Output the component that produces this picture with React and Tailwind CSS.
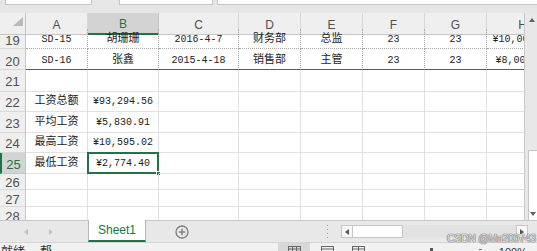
import React from 'react';

const GRID = 'grid grid-cols-[26px_62px_71px_80px_62px_62px_62px_62px_72px]';
const MONO = "[font-family:'Liberation_Mono','Noto_Sans_CJK_SC',monospace]";
const SANS = "[font-family:'Liberation_Sans','Noto_Sans_CJK_SC',sans-serif]";

const cols = ['A', 'B', 'C', 'D', 'E', 'F', 'G', 'H'];

const rows = [
  { n: 19, h: 'h-[20px]', kind: 'data', cells: ['SD-15', '胡珊珊', '2016-4-7', '财务部', '总监', '23', '23', '¥10,000.00'] },
  { n: 20, h: 'h-[21px]', kind: 'dataLast', cells: ['SD-16', '张鑫', '2015-4-18', '销售部', '主管', '23', '23', '¥8,000.00'] },
  { n: 21, h: 'h-[22px]', cells: [] },
  { n: 22, h: 'h-[20px]', cells: ['工资总额', '¥93,294.56'] },
  { n: 23, h: 'h-[21px]', cells: ['平均工资', '¥5,830.91'] },
  { n: 24, h: 'h-[20px]', cells: ['最高工资', '¥10,595.02'] },
  { n: 25, h: 'h-[21px]', cells: ['最低工资', '¥2,774.40'], sel: true },
  { n: 26, h: 'h-[16px]', cells: [] },
  { n: 27, h: 'h-[17px]', cells: [] },
  { n: 28, h: 'h-[17px]', cells: [] },
];

const isCjk = (s) => /[\u4e00-\u9fff]/.test(s);

function Tri({ dir, className }) {
  const pts = {
    up: '0,4 3,0 6,4',
    down: '0,0 6,0 3,4',
    left: '4,0 4,6 0,3',
    right: '0,0 0,6 4,3',
  }[dir];
  const flat = dir === 'up' || dir === 'down';
  return (
    <svg width={flat ? 6 : 4} height={flat ? 4 : 6} viewBox={flat ? '0 0 6 4' : '0 0 4 6'} className={className}>
      <polygon points={pts} fill="currentColor" />
    </svg>
  );
}

function Cell({ text, kind, sel }) {
  let border = 'border-r border-b border-[#e1e1e1]';
  if (kind === 'data') border = 'border-r border-b border-dotted border-[#a8a8a8] pt-[2px]';
  if (kind === 'dataLast')
    border = 'border-r border-b border-dotted border-[#a8a8a8] [border-bottom-style:solid] border-b-[#5c5c5c] pt-[2px]';
  const size = text && isCjk(text) ? 'text-[11px]' : 'text-[10px]';
  return (
    <div className={`relative flex items-center justify-center whitespace-nowrap text-[#222] ${MONO} ${size} ${border}`}>
      {text}
      {sel && (
        <>
          <div className="absolute -left-px -top-px -right-px -bottom-px border-2 border-[#217346]" />
          <div className="absolute -right-[3px] -bottom-[3px] h-[5px] w-[5px] bg-[#217346] border border-white" />
        </>
      )}
    </div>
  );
}

function Row({ r }) {
  const low = r.kind ? 'items-end pb-[1px]' : 'items-center pt-[2px]';
  return (
    <div className={`${GRID} ${r.h} shrink-0`}>
      <div
        className={`flex justify-center border-b border-r text-[13px] leading-none ${low} ${SANS} ${
          r.sel
            ? 'bg-[#d3d3d3] text-[#217346] border-l-2 border-l-[#217346] border-r-[#c6c6c6] border-b-[#c6c6c6]'
            : 'bg-[#efefef] text-[#505050] border-r-[#c6c6c6] border-b-[#d8d8d8]'
        }`}
      >
        {r.n}
      </div>
      {cols.map((c, i) => (
        <Cell key={c} text={r.cells[i]} kind={r.kind} sel={r.sel && i === 1} />
      ))}
    </div>
  );
}

function Sheet() {
  return (
    <div className="flex h-[207px] w-[524px] flex-col overflow-hidden bg-white">
      <div className={`${GRID} h-[16px] shrink-0`}>
        <div className="relative border-r border-b border-[#c6c6c6] bg-[#efefef]">
          <svg width="10" height="9" viewBox="0 0 10 9" className="absolute left-[13px] top-[4px]">
            <polygon points="10,0 10,9 0,9" fill="#b9b9b9" />
          </svg>
        </div>
        {cols.map((c) => (
          <div
            key={c}
            className={`flex items-center justify-center border-r text-[12px] ${SANS} ${
              c === 'B'
                ? 'bg-[#d3d3d3] text-[#217346] border-b-2 border-b-[#217346] border-r-[#c6c6c6]'
                : 'bg-[#efefef] text-[#505050] border-b border-b-[#c6c6c6] border-r-[#d8d8d8]'
            }`}
          >
            <span className="pt-[2px]">{c}</span>
          </div>
        ))}
      </div>
      {rows.map((r) => (
        <Row key={r.n} r={r} />
      ))}
    </div>
  );
}

function VScroll() {
  return (
    <div className="flex h-[207px] w-[13px] flex-col border-l border-[#c9c9c9] bg-[#e8e8e8]">
      <div className="flex h-[14px] items-center justify-end pr-[2px] text-[#606060]">
        <Tri dir="up" />
      </div>
      <div className="flex-1" />
      <div className="ml-[3px] h-[57px] border-l border-t border-[#c6c6c6] bg-white" />
      <div className="ml-[3px] flex h-[13px] items-center justify-end border-l border-[#c6c6c6] bg-white pr-[1px] text-[#606060]">
        <Tri dir="down" />
      </div>
    </div>
  );
}

function TabBar() {
  return (
    <div className="flex h-[22px] shrink-0 border-t border-[#c6c6c6] bg-[#e8e8e8]">
      <div className="flex w-[88px] items-center gap-[21px] pl-[24px] text-[#c4c4c4]">
        <Tri dir="left" />
        <Tri dir="right" />
      </div>
      <div
        className={`-mt-px flex w-[58px] items-center justify-center border-x border-b-2 border-x-[#b5b5b5] border-b-[#217346] bg-white text-[12px] text-[#217346] ${SANS}`}
      >
        Sheet1
      </div>
      <div className="flex w-[72px] items-center justify-center">
        <svg width="14" height="14" viewBox="0 0 14 14">
          <circle cx="7" cy="7" r="6" fill="none" stroke="#808080" strokeWidth="1.3" />
          <path d="M7 3.8v6.4M3.8 7h6.4" stroke="#808080" strokeWidth="1.5" />
        </svg>
      </div>
      <div className="flex w-[123px] items-center justify-end pr-[13px]">
        <div className="flex flex-col gap-[3px]">
          <div className="h-px w-px bg-[#9a9a9a]" />
          <div className="h-px w-px bg-[#9a9a9a]" />
          <div className="h-px w-px bg-[#9a9a9a]" />
          <div className="h-px w-px bg-[#9a9a9a]" />
        </div>
      </div>
      <div className="flex w-[187px] items-center">
        <div className="flex h-[13px] w-full bg-[#e2e2e2]">
          <div className="flex w-[12px] items-center justify-center border border-[#c6c6c6] bg-[#f7f7f7] text-[#555]">
            <Tri dir="left" />
          </div>
          <div className="w-[50px] border-y border-r border-[#c6c6c6] bg-white" />
          <div className="flex-1" />
          <div className="flex w-[12px] items-center justify-center border border-[#c6c6c6] bg-[#f7f7f7] text-[#555]">
            <Tri dir="right" />
          </div>
        </div>
      </div>
      <div className="flex-1" />
    </div>
  );
}

function StatusBar() {
  return (
    <div className={`relative flex h-[9px] shrink-0 overflow-hidden border-t border-[#d4d4d4] bg-[#f1f1f1] text-[12px] leading-none text-[#333] ${SANS}`}>
      <span className="pl-[1px] pt-[3px]">就绪</span>
      <span className="pl-[15px] pt-[3px]">帮</span>
      <div className="flex-1" />
      <div className="mr-[172px] flex h-full items-start">
        <div className="flex h-full w-[32px] justify-center bg-[#d8d8d8] pt-[3px]">
          <svg width="13" height="10" viewBox="0 0 13 10">
            <rect x="0.5" y="0.5" width="12" height="9" fill="none" stroke="#666" />
            <path d="M0.5 3h12M4.5 0.5v9M8.5 0.5v9" stroke="#666" />
          </svg>
        </div>
        <div className="ml-[11px] pt-[3px]">
          <svg width="13" height="10" viewBox="0 0 13 10">
            <rect x="0.5" y="0.5" width="12" height="9" fill="none" stroke="#666" />
            <path d="M0.5 3h12" stroke="#666" />
          </svg>
        </div>
        <div className="ml-[18px] pt-[3px]">
          <svg width="13" height="10" viewBox="0 0 13 10">
            <rect x="0.5" y="0.5" width="12" height="9" fill="none" stroke="#666" />
            <path d="M0.5 3h12M6.5 0.5v9" stroke="#666" />
          </svg>
        </div>
      </div>
      <div className="absolute right-[104px] bottom-0 h-[3px] w-[3px] bg-[#555]" />
      <div className="absolute right-[55px] bottom-[1px] h-px w-[3px] bg-[#777]" />
      <span className="absolute right-[10px] top-[4px] text-[11px] leading-none">100%</span>
    </div>
  );
}

export default function App() {
  return (
    <div className="relative flex h-[251px] w-[537px] flex-col overflow-hidden bg-[#e6e6e6]">
      <div className="flex h-[13px] shrink-0 items-start">
        <div className="ml-[5px] h-[5px] w-[87px] border-x border-b border-[#c6c6c6] bg-white" />
        <div className="ml-[27px] h-[5px] w-[94px] border-x border-b border-[#c6c6c6] bg-white" />
        <div className="ml-[4px] h-[5px] flex-1 border-l border-b border-[#c6c6c6] bg-white" />
      </div>
      <div className="flex shrink-0">
        <Sheet />
        <VScroll />
      </div>
      <TabBar />
      <StatusBar />
      <div
        className={`pointer-events-none absolute left-[447px] top-[231px] whitespace-nowrap text-[10.5px] tracking-[-0.3px] text-[#e4e4e4] ${SANS} [text-shadow:0_0_1px_#6a6a6a,0_0_1px_#6a6a6a,0_0_1px_#6a6a6a]`}
      >
        CSDN @Ma200743
      </div>
    </div>
  );
}
